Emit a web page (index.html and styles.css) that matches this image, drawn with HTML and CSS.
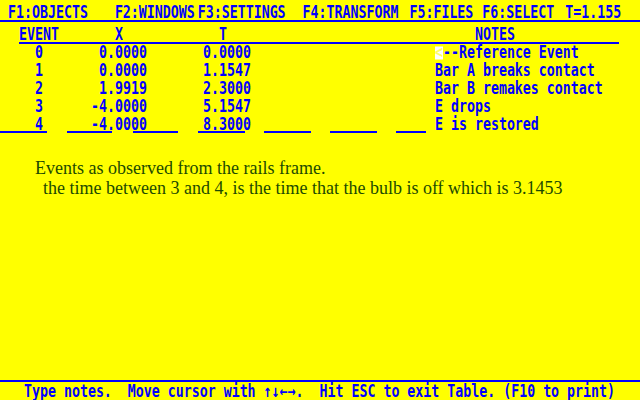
FILE: index.html
```html
<!DOCTYPE html>
<html>
<head>
<meta charset="utf-8">
<title>Event Table</title>
<link rel="stylesheet" href="styles.css">
</head>
<body>
<div class="screen">
  <div class="menu">
    <span class="mi m1">F1:OBJECTS</span>
    <span class="mi m2">F2:WINDOWS</span>
    <span class="mi m3">F3:SETTINGS</span>
    <span class="mi m4">F4:TRANSFORM</span>
    <span class="mi m5">F5:FILES</span>
    <span class="mi m6">F6:SELECT</span>
    <span class="mi m7">T=1.155</span>
  </div>

  <div class="head">
    <div class="c">EVENT</div>
    <div class="c hx">X</div>
    <div class="c hx">T</div>
    <div class="c"></div>
    <div class="c hn">NOTES</div>
  </div>

  <div class="rows">
    <div class="row">
      <div class="c ev">0</div>
      <div class="c num">0.0000</div>
      <div class="c num">0.0000</div>
      <div class="c"></div>
      <div class="c note"><span class="cursor">&lt;</span>--Reference Event</div>
    </div>
    <div class="row">
      <div class="c ev">1</div>
      <div class="c num">0.0000</div>
      <div class="c num">1.1547</div>
      <div class="c"></div>
      <div class="c note">Bar A breaks contact</div>
    </div>
    <div class="row">
      <div class="c ev">2</div>
      <div class="c num">1.9919</div>
      <div class="c num">2.3000</div>
      <div class="c"></div>
      <div class="c note">Bar B remakes contact</div>
    </div>
    <div class="row">
      <div class="c ev">3</div>
      <div class="c num">-4.0000</div>
      <div class="c num">5.1547</div>
      <div class="c"></div>
      <div class="c note">E drops</div>
    </div>
    <div class="row">
      <div class="c ev">4</div>
      <div class="c num">-4.0000</div>
      <div class="c num">8.3000</div>
      <div class="c"></div>
      <div class="c note">E is restored</div>
    </div>
    <div class="rules">
      <span class="seg s1"></span>
      <span class="seg s2"></span>
      <span class="seg s3"></span>
      <span class="seg s4"></span>
      <span class="seg s5"></span>
      <span class="seg s6"></span>
      <span class="seg s7"></span>
    </div>
  </div>

  <div class="comment">
    <p class="l1">Events as observed from the rails frame.</p>
    <p class="l2">the time between 3 and 4, is the time that the bulb is off which is 3.1453</p>
  </div>

  <div class="status">
    <div class="c st">Type notes.  Move cursor with ↑↓←→.  Hit ESC to exit Table. (F10 to print)</div>
  </div>
</div>
</body>
</html>
```

FILE: styles.css
```css
html, body {
  margin: 0;
  padding: 0;
  width: 640px;
  height: 400px;
  overflow: hidden;
  background: #ffff00;
}

.screen {
  width: 640px;
  height: 400px;
  display: flex;
  flex-direction: column;
  color: #0000ff;
  font-family: "DejaVu Sans Mono", "Liberation Mono", monospace;
  font-weight: bold;
  font-size: 13.288px;
}

/* glyph cells: 8px wide, stretched to the tall text-mode look */
.c,
.mi {
  display: block;
  height: 18px;
  line-height: 18px;
  white-space: pre;
  transform: scaleY(1.3);
  transform-origin: 50% 50%;
}

/* ---------- top menu ---------- */
.menu {
  display: flex;
  align-items: flex-start;
  padding: 4px 0 0 8px;
  height: 16px;
  border-bottom: 2px solid #0000ff;
  flex: none;
}
.m2 { margin-left: 27px; }
.m3 { margin-left: 3px; }
.m4 { margin-left: 17px; }
.m5 { margin-left: 11px; }
.m6 { margin-left: 9px; }
.m7 { margin-left: 11px; }

/* ---------- table header ---------- */
.head {
  display: grid;
  grid-template-columns: 32px 96px 104px 184px 184px;
  grid-template-rows: 18px;
  align-items: start;
  margin: 4px 0 0 19px;
  width: 600px;
  height: 16px;
  border-bottom: 2px solid #0000ff;
  flex: none;
}
.hx { text-align: right; padding-right: 24px; }
.hn { padding-left: 40px; }

/* ---------- table rows ---------- */
.rows { flex: none; }
.row {
  display: grid;
  grid-template-columns: 48px 96px 104px 184px 1fr;
  grid-template-rows: 18px;
  padding-left: 3px;
  height: 18px;
}
.ev { padding-left: 32px; }
.num { text-align: right; }

.cursor {
  display: inline-block;
  width: 8px;
  height: 10px;
  line-height: 10px;
  background: #ffffff;
  color: #ffff66;
}

.rules {
  display: flex;
  height: 2px;
  margin-top: -3px;
}
.seg { display: block; height: 2px; background: #0000ff; }
.s1 { width: 47px; }
.s2 { width: 45px; margin-left: 20px; }
.s3 { width: 45px; margin-left: 21px; }
.s4 { width: 47px; margin-left: 20px; }
.s5 { width: 47px; margin-left: 19px; }
.s6 { width: 47px; margin-left: 19px; }
.s7 { width: 30px; margin-left: 19px; }

/* ---------- free text ---------- */
.comment {
  margin-top: 25px;
  font-family: "Liberation Serif", "Times New Roman", serif;
  font-weight: normal;
  font-size: 18px;
  line-height: 20px;
  color: #1c4a00;
  flex: none;
}
.comment p { margin: 0; }
.l1 { padding-left: 35px; }
.l2 { padding-left: 43px; }

/* ---------- status line ---------- */
.status {
  margin-top: auto;
  border-top: 2px solid #0000ff;
  padding: 1px 0 0 24px;
  height: 17px;
  flex: none;
}
```
